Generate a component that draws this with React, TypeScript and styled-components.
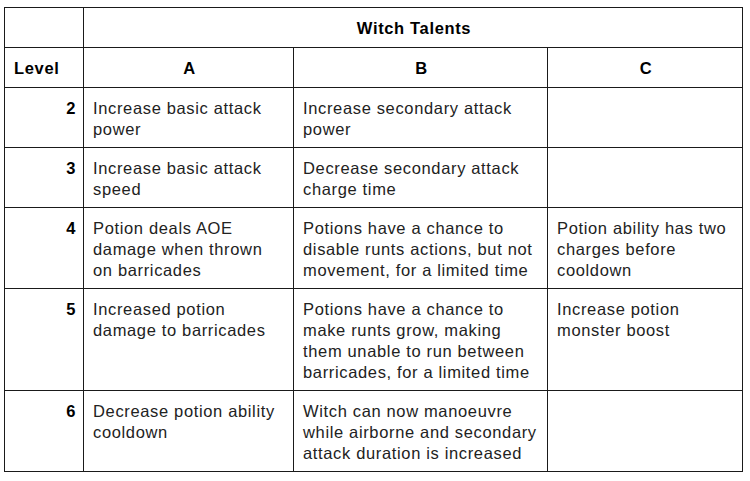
import React from "react";
import styled, { createGlobalStyle } from "styled-components";

const GlobalStyle = createGlobalStyle`
  body {
    margin: 0;
    background: #fff;
    font-family: "Liberation Sans", Arial, sans-serif;
  }
`;

const Page = styled.div`
  padding: 7px 0 0 4px;
`;

const Table = styled.table`
  width: 738px;
  table-layout: fixed;
  border-collapse: collapse;
  font-size: 16.5px;
  line-height: 21px;
  letter-spacing: 0.65px;
  color: #222;
`;

const Cell = styled.td<{ $align?: "left" | "right" | "center"; $bold?: boolean }>`
  border: 1px solid #1a1a1a;
  padding: 10px 7px 7px 9px;
  vertical-align: top;
  text-align: ${(p) => p.$align || "left"};
  font-weight: ${(p) => (p.$bold ? 700 : 400)};
  color: ${(p) => (p.$bold ? "#000" : "#222")};
`;

const HeadCell = styled.th<{ $align?: "left" | "center" }>`
  border: 1px solid #1a1a1a;
  padding: 10px 7px 8px 9px;
  vertical-align: top;
  text-align: ${(p) => p.$align || "center"};
  font-weight: 700;
  color: #000;
`;

type Talent = { level: number; a: string; b: string; c: string };

const talents: Talent[] = [
  {
    level: 2,
    a: "Increase basic attack power",
    b: "Increase secondary attack power",
    c: "",
  },
  {
    level: 3,
    a: "Increase basic attack speed",
    b: "Decrease secondary attack charge time",
    c: "",
  },
  {
    level: 4,
    a: "Potion deals AOE damage when thrown on barricades",
    b: "Potions have a chance to disable runts actions, but not movement, for a limited time",
    c: "Potion ability has two charges before cooldown",
  },
  {
    level: 5,
    a: "Increased potion damage to barricades",
    b: "Potions have a chance to make runts grow, making them unable to run between barricades, for a limited time",
    c: "Increase potion monster boost",
  },
  {
    level: 6,
    a: "Decrease potion ability cooldown",
    b: "Witch can now manoeuvre while airborne and secondary attack duration is increased",
    c: "",
  },
];

const App = () => {
  return (
    <>
      <GlobalStyle />
      <Page>
        <Table>
          <colgroup>
            <col style={{ width: 79 }} />
            <col style={{ width: 210 }} />
            <col style={{ width: 254 }} />
            <col style={{ width: 195 }} />
          </colgroup>
          <thead>
            <tr>
              <HeadCell />
              <HeadCell colSpan={3}>Witch Talents</HeadCell>
            </tr>
            <tr>
              <HeadCell $align="left">Level</HeadCell>
              <HeadCell>A</HeadCell>
              <HeadCell>B</HeadCell>
              <HeadCell>C</HeadCell>
            </tr>
          </thead>
          <tbody>
            {talents.map((t) => (
              <tr key={t.level}>
                <Cell $align="right" $bold>
                  {t.level}
                </Cell>
                <Cell>{t.a}</Cell>
                <Cell>{t.b}</Cell>
                <Cell>{t.c}</Cell>
              </tr>
            ))}
          </tbody>
        </Table>
      </Page>
    </>
  );
};

export default App;
